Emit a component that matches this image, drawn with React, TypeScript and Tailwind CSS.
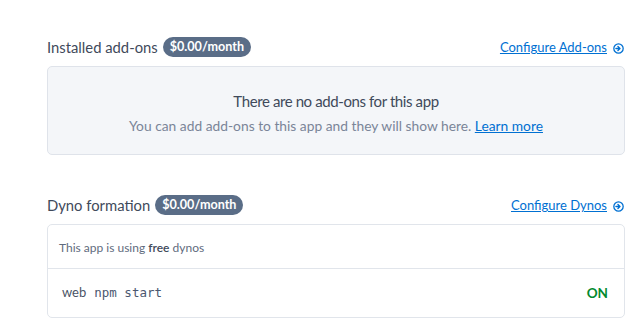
import React from 'react';

function ArrowCircle() {
  return (
    <svg width="11" height="11" viewBox="0 0 12 12" className="ml-[6px] shrink-0">
      <circle cx="6" cy="6" r="5.1" fill="none" stroke="#0070d2" strokeWidth="1.4" />
      <path d="M3.2 6h3.6M5.4 3.9L7.6 6 5.4 8.1" fill="none" stroke="#0070d2" strokeWidth="1.5" strokeLinecap="round" strokeLinejoin="round" />
    </svg>
  );
}

function SectionHeader({ title, link }: { title: string; link: string }) {
  return (
    <div className="flex items-center justify-between h-[20px]">
      <div className="flex items-center">
        <span className="text-[14.8px] text-[#3f4a5b]">{title}</span>
        <span className="ml-[5px] h-[20px] px-[7px] rounded-full bg-[#5a6d87] text-white text-[12.6px] font-bold flex items-center leading-none">
          $0.00/month
        </span>
      </div>
      <a href="#" className="flex items-center text-[13px] text-[#0070d2] underline mr-[1px] mt-[2px]">
        {link}
        <ArrowCircle />
      </a>
    </div>
  );
}

export default function App() {
  return (
    <div className="w-[643px] h-[320px] bg-white overflow-hidden" style={{ fontFamily: 'Lato, "Noto Sans", sans-serif' }}>
      <div className="pl-[47px] w-[625px] pt-[37px]">
        <SectionHeader title="Installed add-ons" link="Configure Add-ons" />
        <div className="mt-[9px] h-[89px] pt-[5px] rounded-[5px] border border-[#dfe3ea] bg-[#f4f6f9] flex flex-col items-center justify-center">
          <div className="text-[15px] tracking-[-0.4px] text-[#3f4a5b] leading-none">There are no add-ons for this app</div>
          <div className="mt-[10px] text-[13.8px] text-[#7a8598] leading-none">
            You can add add-ons to this app and they will show here.{' '}
            <a href="#" className="text-[#0070d2] underline">Learn more</a>
          </div>
        </div>

        <div className="mt-[40px]">
          <SectionHeader title="Dyno formation" link="Configure Dynos" />
        </div>
        <div className="mt-[9px] rounded-[5px] border border-[#e1e5eb] bg-white">
          <div className="h-[44px] pt-[2px] px-[11px] flex items-center text-[12px] text-[#5f6b7e] border-b border-[#e1e5eb]">
            This app is using&nbsp;<span className="font-semibold text-[#3f4a5b]">free</span>&nbsp;dynos
          </div>
          <div className="h-[48px] px-[14px] flex items-center justify-between">
            <div className="flex items-center">
              <span className="text-[13px] text-[#4a5466]">web</span>
              <span className="ml-[8px] text-[12.5px] text-[#4b5870]" style={{ fontFamily: '"DejaVu Sans Mono", monospace' }}>npm start</span>
            </div>
            <span className="mr-[2px] text-[13.5px] font-bold text-[#028a2f]">ON</span>
          </div>
        </div>
      </div>
    </div>
  );
}
